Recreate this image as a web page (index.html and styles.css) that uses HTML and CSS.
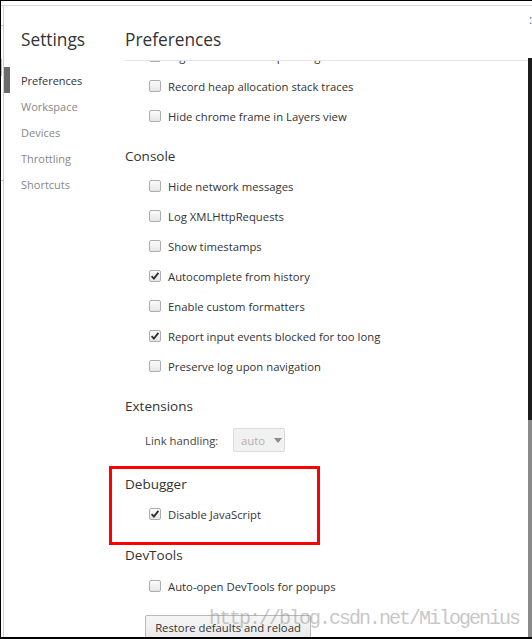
FILE: index.html
```html
<!DOCTYPE html>
<html>
<head>
<meta charset="utf-8">
<link rel="stylesheet" href="styles.css">
</head>
<body>
<div class="frame">
  <div class="topstrip"></div>
  <div class="stage">
    <div class="leftstrip">
      <span class="mark m1"></span>
      <span class="mark m2"></span>
      <span class="mark m3"></span>
    </div>
    <div class="dialog">
      <aside class="sidebar">
        <div class="title">Settings</div>
        <ul class="nav">
          <li class="nav-item active">Preferences</li>
          <li class="nav-item">Workspace</li>
          <li class="nav-item">Devices</li>
          <li class="nav-item">Throttling</li>
          <li class="nav-item">Shortcuts</li>
        </ul>
      </aside>
      <main class="main">
        <div class="title main-title">Preferences</div>
        <div class="content">
          <div class="scroll">
            <div class="row"><span class="cb"></span><span>High resolution CPU profiling</span></div>
            <div class="row"><span class="cb"></span><span>Record heap allocation stack traces</span></div>
            <div class="row"><span class="cb"></span><span>Hide chrome frame in Layers view</span></div>

            <div class="section-title">Console</div>
            <div class="row"><span class="cb"></span><span>Hide network messages</span></div>
            <div class="row"><span class="cb"></span><span>Log XMLHttpRequests</span></div>
            <div class="row"><span class="cb"></span><span>Show timestamps</span></div>
            <div class="row"><span class="cb checked"><svg viewBox="0 0 12 12" width="12" height="12"><path d="M2.6 6.2 L4.9 8.6 L9.4 2.9" fill="none" stroke="#303030" stroke-width="1.9"/></svg></span><span>Autocomplete from history</span></div>
            <div class="row"><span class="cb"></span><span>Enable custom formatters</span></div>
            <div class="row"><span class="cb checked"><svg viewBox="0 0 12 12" width="12" height="12"><path d="M2.6 6.2 L4.9 8.6 L9.4 2.9" fill="none" stroke="#303030" stroke-width="1.9"/></svg></span><span>Report input events blocked for too long</span></div>
            <div class="row"><span class="cb"></span><span>Preserve log upon navigation</span></div>

            <div class="section-title">Extensions</div>
            <div class="link-row">
              <span class="link-label">Link handling:</span>
              <span class="select"><span>auto</span><span class="tri"></span></span>
            </div>

            <div class="section-title">Debugger</div>
            <div class="row"><span class="cb checked"><svg viewBox="0 0 12 12" width="12" height="12"><path d="M2.6 6.2 L4.9 8.6 L9.4 2.9" fill="none" stroke="#303030" stroke-width="1.9"/></svg></span><span>Disable JavaScript</span></div>

            <div class="section-title devtools">DevTools</div>
            <div class="row"><span class="cb"></span><span>Auto-open DevTools for popups</span></div>

            <div class="btn-row"><span class="btn">Restore defaults and reload</span></div>
          </div>
          <div class="watermark">http://blog.csdn.net/Milogenius</div>
        </div>
      </main>
      <div class="redbox"></div>
    </div>
    <div class="rightstrip">
      <span class="dots">:</span>
      <span class="thumb"></span>
      <span class="track"></span>
    </div>
  </div>
</div>
</body>
</html>
```

FILE: styles.css
```css
* { box-sizing: border-box; }
html, body { margin: 0; padding: 0; background: #fff; }
body {
  font-family: "Segoe UI", "Open Sans", "Noto Sans", sans-serif;
  color: #333;
  width: 532px;
  height: 639px;
  overflow: hidden;
}
.frame {
  width: 532px;
  height: 639px;
  border-top: 1px solid #000;
  border-left: 1px solid #000;
  border-bottom: 2px solid #000;
  display: flex;
  flex-direction: column;
  background: #fff;
}
.topstrip { height: 4px; flex: none; }
.stage {
  flex: 1;
  display: flex;
  border-top: 1px solid #d6d6d6;
  min-height: 0;
}
.leftstrip {
  width: 2px;
  flex: none;
  position: relative;
}
.mark { position: absolute; left: 0; width: 2px; background: #c8c8c8; }
.m1 { top: 19px; height: 1px; }
.m2 { top: 53px; height: 17px; width: 1px; background: #bbb; }
.m3 { top: 174px; height: 1px; }
.dialog {
  flex: 1;
  display: flex;
  border-left: 1px solid #cfcfcf;
  min-width: 0;
  position: relative;
}
.sidebar {
  width: 121px;
  flex: none;
  position: relative;
}
.title {
  height: 54px;
  padding-top: 20px;
  line-height: 28px;
  font-size: 17.3px;
  color: #333;
  white-space: nowrap;
}
.sidebar .title { padding-left: 17px; }
.nav {
  list-style: none;
  margin: 7px 0 0 0;
  padding: 0;
}
.nav-item {
  height: 26px;
  line-height: 27px;
  padding-left: 17px;
  font-size: 11px;
  color: #888;
  position: relative;
}
.nav-item.active { color: #333; }
.nav-item.active::before {
  content: "";
  position: absolute;
  left: 0;
  top: 0;
  width: 6px;
  height: 26px;
  background: #6b6b6b;
}
.main {
  flex: 1;
  display: flex;
  flex-direction: column;
  min-width: 0;
}
.main-title {
  border-bottom: 1px solid #e4e4e4;
  height: 55px;
}
.content {
  flex: 1;
  position: relative;
  overflow: hidden;
}
.scroll {
  margin-top: -20px;
}
.row {
  height: 30px;
  display: flex;
  align-items: center;
  padding-left: 24px;
  gap: 7px;
  font-size: 11.3px;
  color: #333;
  white-space: nowrap;
}
.cb {
  width: 12px;
  height: 12px;
  flex: none;
  border: 1px solid #adadad;
  border-radius: 2px;
  background: linear-gradient(#fbfbfb, #e6e6e6);
  position: relative;
}
.cb svg { position: absolute; left: -1px; top: -1px; }
.section-title {
  margin-top: 12px;
  height: 26px;
  line-height: 26px;
  font-size: 13.5px;
  color: #333;
  margin-bottom: 2px;
}
.section-title.devtools { margin-top: 13px; margin-bottom: 3px; }
.link-row {
  height: 38px;
  display: flex;
  align-items: center;
  padding-left: 20px;
  font-size: 11.3px;
  color: #444;
}
.link-label { width: 88px; }
.select {
  width: 52px;
  height: 24px;
  border: 1px solid #dcdcdc;
  border-radius: 2px;
  background: #f1f1f1;
  display: flex;
  align-items: center;
  padding-left: 7px;
  gap: 9px;
  font-size: 11.3px;
  color: #b0b0b0;
}
.tri {
  width: 0;
  height: 0;
  border-left: 4px solid transparent;
  border-right: 4px solid transparent;
  border-top: 5px solid #8a8a8a;
}
.btn-row {
  margin-top: 14px;
  padding-left: 20px;
}
.btn {
  display: inline-block;
  width: 166px;
  height: 25px;
  line-height: 23px;
  border: 1px solid #b9b9b9;
  border-radius: 2px;
  background: linear-gradient(#f6f6f6, #e9e9e9);
  text-align: center;
  font-size: 11.3px;
  color: #333;
}
.redbox {
  position: absolute;
  left: 105px;
  top: 460px;
  width: 211px;
  height: 79px;
  border: 3px solid #f00;
}
.watermark {
  position: absolute;
  left: 84px;
  top: 546px;
  font-family: "Liberation Mono", monospace;
  font-size: 20px;
  letter-spacing: -2px;
  color: rgba(150, 150, 150, 0.55);
  white-space: nowrap;
}
.rightstrip {
  width: 4px;
  flex: none;
  display: flex;
  flex-direction: column;
  position: relative;
}
.dots {
  position: absolute;
  left: 1px;
  top: 8px;
  font-size: 12px;
  line-height: 12px;
  color: #666;
}
.thumb {
  margin-top: 52px;
  height: 362px;
  background: #1c1c1c;
}
.track {
  flex: 1;
  background: #8a8a8a;
}
```
